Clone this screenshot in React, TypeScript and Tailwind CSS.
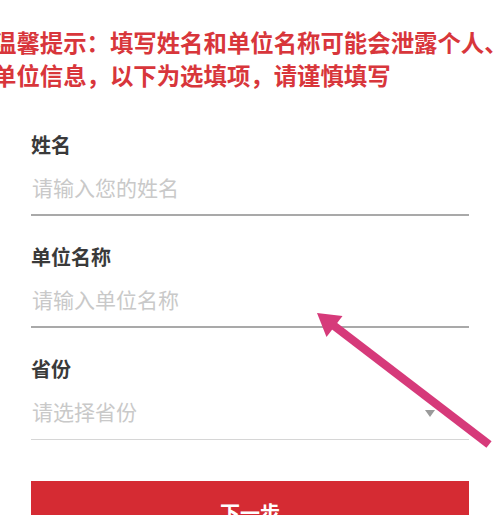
import React from "react";

const sans = { fontFamily: '"Noto Sans CJK SC", "Noto Sans", sans-serif' };

function Field({ label, placeholder, select, last }: { label: string; placeholder: string; select?: boolean; last?: boolean }) {
  return (
    <div className={last ? "" : "mb-[29px]"}>
      <div className="h-[24px] leading-[24px] text-[20px] font-bold text-[#3a3a3a]">{label}</div>
      <div
        className={`mt-[4px] h-[55px] flex items-center justify-between ${
          last ? "border-b border-[#d6d6d6]" : "border-b-2 border-[#a9a9a9]"
        }`}
      >
        <span className="text-[21px] text-[#c9c9c9] pl-[1px]">{placeholder}</span>
        {select && (
          <span className="mr-[34px] mt-[2px] w-0 h-0 border-l-[5px] border-r-[5px] border-t-[7px] border-l-transparent border-r-transparent border-t-[#9a9a9a]" />
        )}
      </div>
    </div>
  );
}

export default function App() {
  return (
    <div className="relative w-[500px] h-[515px] overflow-hidden bg-white" style={sans}>
      <div className="pt-[26px] -ml-[7px] text-[23.4px] leading-[33px] font-bold text-[#d8363b] whitespace-nowrap">
        <div>温馨提示：填写姓名和单位名称可能会泄露个人、</div>
        <div>单位信息，以下为选填项，请谨慎填写</div>
      </div>

      <div className="mt-[41px] mx-[31px]">
        <Field label="姓名" placeholder="请输入您的姓名" />
        <Field label="单位名称" placeholder="请输入单位名称" />
        <Field label="省份" placeholder="请选择省份" select last />
        <button className="mt-[41px] w-full h-[64px] bg-[#d52b33] text-white text-[20px] font-bold flex items-center justify-center">
          下一步
        </button>
      </div>

      <svg className="absolute inset-0 pointer-events-none" width="500" height="515" viewBox="0 0 500 515">
        <line x1="333" y1="325" x2="489" y2="444.5" stroke="#d63a7a" strokeWidth="8.5" />
        <polygon points="317,313 342.5,316 326.5,337" fill="#d63a7a" />
      </svg>
    </div>
  );
}
